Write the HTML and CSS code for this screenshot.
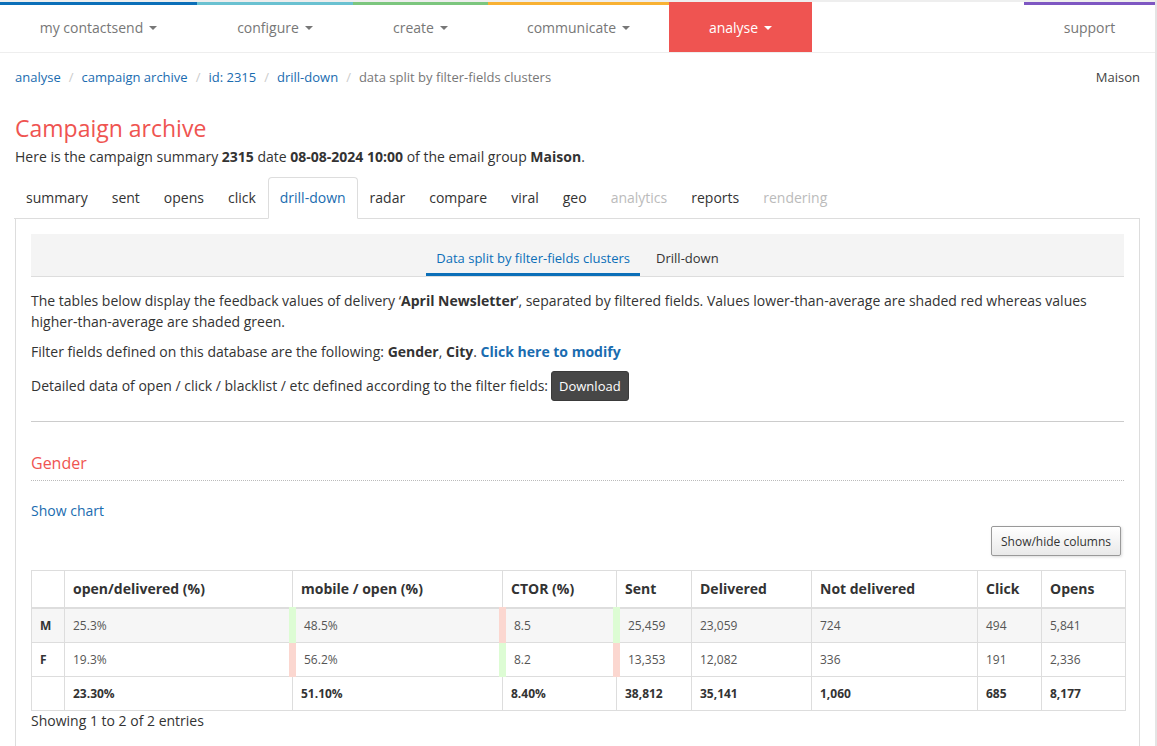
FILE: index.html
```html
<!DOCTYPE html>
<html lang="en">
<head>
<meta charset="utf-8">
<title>Campaign archive</title>
<link rel="stylesheet" href="styles.css">
</head>
<body>
<div class="page">
  <nav class="topnav">
    <ul class="menu">
      <li class="item bar-blue"><a href="#">my contactsend <span class="caret"></span></a></li>
      <li class="item bar-teal"><a href="#">configure <span class="caret"></span></a></li>
      <li class="item bar-green"><a href="#">create <span class="caret"></span></a></li>
      <li class="item bar-orange"><a href="#">communicate <span class="caret"></span></a></li>
      <li class="item active"><a href="#">analyse <span class="caret"></span></a></li>
      <li class="spacer"></li>
      <li class="item bar-purple"><a href="#">support</a></li>
    </ul>
  </nav>

  <div class="container">
    <div class="crumbs">
      <ol class="breadcrumb">
        <li><a href="#">analyse</a></li>
        <li><a href="#">campaign archive</a></li>
        <li><a href="#">id: 2315</a></li>
        <li><a href="#">drill-down</a></li>
        <li class="current">data split by filter-fields clusters</li>
      </ol>
      <span class="group">Maison</span>
    </div>

    <h1 class="title">Campaign archive</h1>
    <p class="lead">Here is the campaign summary <b>2315</b> date <b>08-08-2024 10:00</b> of the email group <b>Maison</b>.</p>

    <ul class="tabs">
      <li><a href="#">summary</a></li>
      <li><a href="#">sent</a></li>
      <li><a href="#">opens</a></li>
      <li><a href="#">click</a></li>
      <li class="active"><a href="#">drill-down</a></li>
      <li><a href="#">radar</a></li>
      <li><a href="#">compare</a></li>
      <li><a href="#">viral</a></li>
      <li><a href="#">geo</a></li>
      <li class="disabled"><a href="#">analytics</a></li>
      <li><a href="#">reports</a></li>
      <li class="disabled"><a href="#">rendering</a></li>
    </ul>

    <div class="panel">
      <div class="subnav">
        <a href="#" class="sub active">Data split by filter-fields clusters</a>
        <a href="#" class="sub">Drill-down</a>
      </div>

      <p class="text">The tables below display the feedback values of delivery ‘<b>April Newsletter</b>’, separated by filtered fields. Values lower-than-average are shaded red whereas values higher-than-average are shaded green.</p>
      <p class="text">Filter fields defined on this database are the following: <b>Gender</b>, <b>City</b>. <a href="#" class="strong-link">Click here to modify</a></p>
      <div class="dl-row">
        <span>Detailed data of open / click / blacklist / etc defined according to the filter fields:</span>
        <button class="btn-dark">Download</button>
      </div>

      <hr class="sep">

      <h3 class="section">Gender</h3>
      <a href="#" class="chart-link">Show chart</a>

      <div class="tools">
        <button class="btn-cols">Show/hide columns</button>
      </div>

      <table class="data">
        <colgroup>
          <col style="width:33px">
          <col style="width:228px">
          <col style="width:210px">
          <col style="width:114px">
          <col style="width:75px">
          <col style="width:120px">
          <col style="width:166px">
          <col style="width:64px">
          <col style="width:84px">
        </colgroup>
        <thead>
          <tr>
            <th></th>
            <th>open/delivered (%)</th>
            <th>mobile / open (%)</th>
            <th>CTOR (%)</th>
            <th>Sent</th>
            <th>Delivered</th>
            <th>Not delivered</th>
            <th>Click</th>
            <th>Opens</th>
          </tr>
        </thead>
        <tbody>
          <tr class="odd">
            <td class="key">M</td>
            <td class="up">25.3%</td>
            <td class="down">48.5%</td>
            <td class="up">8.5</td>
            <td>25,459</td>
            <td>23,059</td>
            <td>724</td>
            <td>494</td>
            <td>5,841</td>
          </tr>
          <tr>
            <td class="key">F</td>
            <td class="down">19.3%</td>
            <td class="up">56.2%</td>
            <td class="down">8.2</td>
            <td>13,353</td>
            <td>12,082</td>
            <td>336</td>
            <td>191</td>
            <td>2,336</td>
          </tr>
          <tr class="total">
            <td></td>
            <td>23.30%</td>
            <td>51.10%</td>
            <td>8.40%</td>
            <td>38,812</td>
            <td>35,141</td>
            <td>1,060</td>
            <td>685</td>
            <td>8,177</td>
          </tr>
        </tbody>
      </table>
      <div class="info">Showing 1 to 2 of 2 entries</div>
    </div>
  </div>
</div>
</body>
</html>
```

FILE: styles.css
```css
* { box-sizing: border-box; }

body {
  margin: 0;
  font-family: "Open Sans", "Liberation Sans", sans-serif;
  font-size: 14px;
  line-height: 20px;
  color: #333;
  background: #fff;
}

a { text-decoration: none; color: #1a6cb0; }

.page {
  width: 1157px;
  min-height: 746px;
  border-right: 2px solid #e4e4e4;
  overflow: hidden;
}

/* top navigation */
.topnav {
  border-top: 2px solid #eeeeee;
  border-bottom: 1px solid #eeeeee;
}
.menu {
  display: flex;
  list-style: none;
  margin: 0;
  padding: 0;
}
.menu .spacer { flex: 1; }
.menu .item a {
  display: flex;
  align-items: center;
  justify-content: center;
  height: 50px;
  padding: 0 0 1px;
  border-top: 3px solid transparent;
  color: #777;
  font-size: 14px;
}
.menu .bar-blue a { width: 197px; border-top-color: #0b6fb8; }
.menu .bar-teal a { width: 156px; border-top-color: #6ac1d1; }
.menu .bar-green a { width: 135px; border-top-color: #7cc67e; }
.menu .bar-orange a { width: 181px; border-top-color: #f8b133; }
.menu .bar-purple a { width: 131px; border-top-color: #7e57c2; }
.menu .active a {
  width: 143px;
  background: #ef5451;
  border-top-color: #ef5451;
  color: #fff;
}
.caret {
  display: inline-block;
  width: 0;
  height: 0;
  margin-left: 6px;
  border-top: 4px solid;
  border-left: 4px solid transparent;
  border-right: 4px solid transparent;
}

/* content */
.container { padding: 0 15px; }

.crumbs {
  display: flex;
  justify-content: space-between;
  margin-top: 14px;
  font-size: 13px;
  line-height: 20px;
}
.breadcrumb {
  display: flex;
  list-style: none;
  margin: 0;
  padding: 0;
}
.breadcrumb li + li::before {
  content: "/";
  color: #ccc;
  padding: 0 8px;
}
.breadcrumb .current { color: #777; }
.group { color: #444; }

.title {
  margin: 28px 0 0;
  font-size: 23px;
  line-height: 26px;
  font-weight: 400;
  color: #ef5451;
}
.lead { margin: 6px 0 0; }

.tabs {
  display: flex;
  list-style: none;
  margin: 10px 0 0 -1px;
  padding: 0;
  border-bottom: 1px solid #ddd;
}
.tabs li { margin-bottom: -1px; }
.tabs a {
  display: block;
  padding: 10px 11px;
  line-height: 20px;
  border: 1px solid transparent;
  border-radius: 4px 4px 0 0;
  color: #333;
}
.tabs .active a {
  color: #1a6cb0;
  border-color: #ddd;
  border-bottom-color: #fff;
  background: #fff;
}
.tabs .disabled a { color: #bbb; }

.panel {
  border: 1px solid #ddd;
  border-top: 0;
  padding: 15px 15px 40px;
}

.subnav {
  display: flex;
  justify-content: center;
  gap: 6px;
  height: 43px;
  background: #f4f4f4;
  border-bottom: 1px solid #ddd;
  margin-bottom: 13px;
}
.sub {
  padding: 14px 10px 5px;
  font-size: 13px;
  line-height: 20px;
  border-bottom: 3px solid transparent;
  color: #333;
}
.sub.active {
  color: #0b6fb8;
  border-bottom-color: #0b6fb8;
}

.text {
  margin: 0 0 9px;
  line-height: 21px;
}
.strong-link { font-weight: 700; color: #1a6cb0; }

.dl-row {
  display: flex;
  align-items: center;
  gap: 3px;
}
.btn-dark {
  height: 30px;
  padding: 0 7px;
  font-family: inherit;
  font-size: 13px;
  color: #fff;
  background: #474747;
  border: 1px solid #3a3a3a;
  border-radius: 3px;
}

.sep {
  margin: 20px 0 0;
  border: 0;
  border-top: 1px solid #ccc;
  height: 0;
}

.section {
  margin: 30px 0 0;
  padding-bottom: 6px;
  font-size: 16px;
  line-height: 22px;
  font-weight: 400;
  color: #ef5451;
  border-bottom: 1px dotted #bbb;
}

.chart-link {
  display: block;
  margin-top: 20px;
  width: max-content;
}

.tools {
  display: flex;
  justify-content: flex-end;
  margin-top: 5px;
  padding-right: 3px;
}
.btn-cols {
  height: 30px;
  padding: 0 9px;
  font-family: inherit;
  font-size: 12px;
  color: #333;
  background: linear-gradient(to bottom, #ffffff 0%, #e9e9e9 100%);
  border: 1px solid #999;
  border-radius: 2px;
  box-shadow: 1px 1px 3px rgba(0,0,0,0.15);
}

.data {
  margin-top: 14px;
  width: 1094px;
  table-layout: fixed;
  border-collapse: collapse;
  border: 1px solid #ddd;
}
.data th, .data td {
  border: 1px solid #ddd;
  text-align: left;
  padding: 8px 8px;
}
.data th {
  font-size: 14px;
  line-height: 20px;
  font-weight: 700;
  border-bottom: 2px solid #ddd;
}
.data td {
  font-size: 12px;
  line-height: 17px;
  color: #555;
}
.data tr.odd td { background: #f6f6f6; }
.data td.key { font-weight: 700; color: #333; }
.data td.up { border-right: 7px solid #ddfcd4; }
.data td.down { border-right: 7px solid #fbd7d0; }
.data tr.total td { font-weight: 700; color: #333; }

.info { margin-top: 0; line-height: 20px; }
```
